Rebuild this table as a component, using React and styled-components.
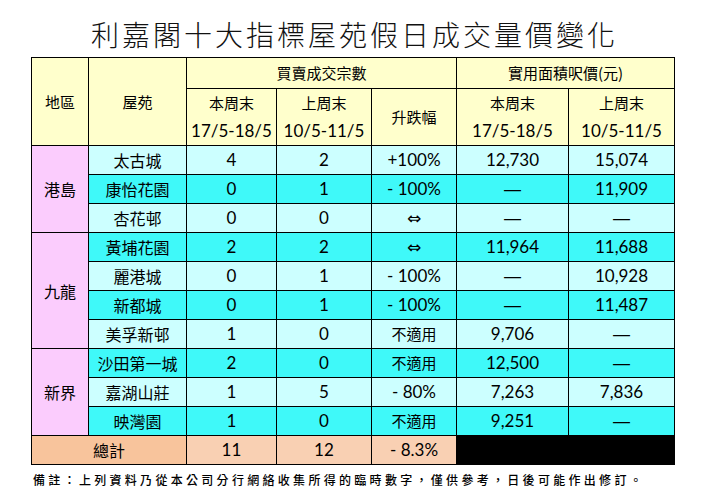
import React from 'react'
import styled, { createGlobalStyle } from 'styled-components'

const Global = createGlobalStyle`
  html, body { margin: 0; padding: 0; background: #fff; }
  body { font-family: "Lato", "Noto Sans CJK TC", sans-serif; color: #000; }
`

const Page = styled.div`
  width: 706px;
  height: 493px;
  display: flex;
  flex-direction: column;
  align-items: center;
  box-sizing: border-box;
  padding-top: 18px;
`

const Title = styled.h1`
  margin: 0 0 7px 3px;
  font-family: "Noto Sans CJK TC", sans-serif;
  font-weight: 300;
  font-size: 28px;
  line-height: 32px;
  letter-spacing: 3px;
  color: #111;
`

const Table = styled.table`
  border-collapse: collapse;
  table-layout: fixed;
  width: 643px;
  border: 1px solid #000;
`

const bgs = {
  head: '#ffffcc',
  pink: '#fbccfd',
  light: '#ccffff',
  cyan: '#3ff9f9',
  total: '#f8c49c',
  total2: '#f9d0b3',
  black: '#000',
}

const Cell = styled.td`
  border: 1px solid #000;
  background: ${p => bgs[p.$bg || 'light']};
  height: ${p => p.$h || 28}px;
  padding: 0;
  text-align: center;
  vertical-align: middle;
  font-family: ${p => p.$num ? '"Lato", "Noto Sans CJK TC", sans-serif' : '"Noto Sans CJK TC", sans-serif'};
  font-size: ${p => p.$num ? 17 : 15}px;
  line-height: 18px;
  white-space: nowrap;
`

const Lines = styled.div`
  display: flex;
  flex-direction: column;
  align-items: center;
  line-height: 28px;
  font-size: 15px;
  span:last-child {
    font-family: "Lato", sans-serif;
    font-size: 17px;
  }
`

const Arrow = styled.span`
  font-family: "DejaVu Sans", sans-serif;
  font-size: 17px;
`

const Dash = styled.span`
  font-family: "Liberation Sans", sans-serif;
  font-size: 17px;
`

const Note = styled.p`
  align-self: flex-start;
  margin: 6px 0 0 33px;
  font-family: "Noto Sans CJK TC", sans-serif;
  font-size: 12px;
  letter-spacing: 3.3px;
  font-weight: 500;
  white-space: nowrap;
`

const DASH = <Dash>—</Dash>
const ARROW = <Arrow>⇔</Arrow>

const groups = [
  { region: '港島', rows: [
    ['太古城', '4', '2', '+100%', '12,730', '15,074'],
    ['康怡花園', '0', '1', '- 100%', DASH, '11,909'],
    ['杏花邨', '0', '0', ARROW, DASH, DASH],
  ]},
  { region: '九龍', rows: [
    ['黃埔花園', '2', '2', ARROW, '11,964', '11,688'],
    ['麗港城', '0', '1', '- 100%', DASH, '10,928'],
    ['新都城', '0', '1', '- 100%', DASH, '11,487'],
    ['美孚新邨', '1', '0', '不適用', '9,706', DASH],
  ]},
  { region: '新界', rows: [
    ['沙田第一城', '2', '0', '不適用', '12,500', DASH],
    ['嘉湖山莊', '1', '5', '- 80%', '7,263', '7,836'],
    ['映灣園', '1', '0', '不適用', '9,251', DASH],
  ]},
]

const widths = [57, 98, 90, 95, 85, 112, 106]

export default function App() {
  let idx = 0
  return (
    <Page>
      <Global />
      <Title>利嘉閣十大指標屋苑假日成交量價變化</Title>
      <Table>
        <colgroup>
          {widths.map((w, i) => <col key={i} style={{ width: w }} />)}
        </colgroup>
        <thead>
          <tr>
            <Cell $bg="head" rowSpan={2}>地區</Cell>
            <Cell $bg="head" rowSpan={2}>屋苑</Cell>
            <Cell $bg="head" colSpan={3} $h={30}>買賣成交宗數</Cell>
            <Cell $bg="head" colSpan={2} $h={30}>實用面積呎價(元)</Cell>
          </tr>
          <tr>
            <Cell $bg="head" $h={56}><Lines><span>本周末</span><span>17/5-18/5</span></Lines></Cell>
            <Cell $bg="head" $h={56}><Lines><span>上周末</span><span>10/5-11/5</span></Lines></Cell>
            <Cell $bg="head" $h={56}>升跌幅</Cell>
            <Cell $bg="head" $h={56}><Lines><span>本周末</span><span>17/5-18/5</span></Lines></Cell>
            <Cell $bg="head" $h={56}><Lines><span>上周末</span><span>10/5-11/5</span></Lines></Cell>
          </tr>
        </thead>
        <tbody>
          {groups.map(g => g.rows.map((r, i) => {
            const bg = idx++ % 2 === 0 ? 'light' : 'cyan'
            return (
              <tr key={r[0]}>
                {i === 0 && <Cell $bg="pink" rowSpan={g.rows.length} style={{ fontSize: 16 }}>{g.region}</Cell>}
                <Cell $bg={bg} style={{ fontSize: 16 }}>{r[0]}</Cell>
                <Cell $bg={bg} $num>{r[1]}</Cell>
                <Cell $bg={bg} $num>{r[2]}</Cell>
                <Cell $bg={bg} $num={r[3] !== '不適用'}>{r[3]}</Cell>
                <Cell $bg={bg} $num>{r[4]}</Cell>
                <Cell $bg={bg} $num>{r[5]}</Cell>
              </tr>
            )
          }))}
          <tr>
            <Cell $bg="total" colSpan={2} style={{ fontSize: 16 }}>總計</Cell>
            <Cell $bg="total2" $num>11</Cell>
            <Cell $bg="total2" $num>12</Cell>
            <Cell $bg="total2" $num>- 8.3%</Cell>
            <Cell $bg="black" colSpan={2} />
          </tr>
        </tbody>
      </Table>
      <Note>備註：上列資料乃從本公司分行網絡收集所得的臨時數字，僅供參考，日後可能作出修訂。</Note>
    </Page>
  )
}
